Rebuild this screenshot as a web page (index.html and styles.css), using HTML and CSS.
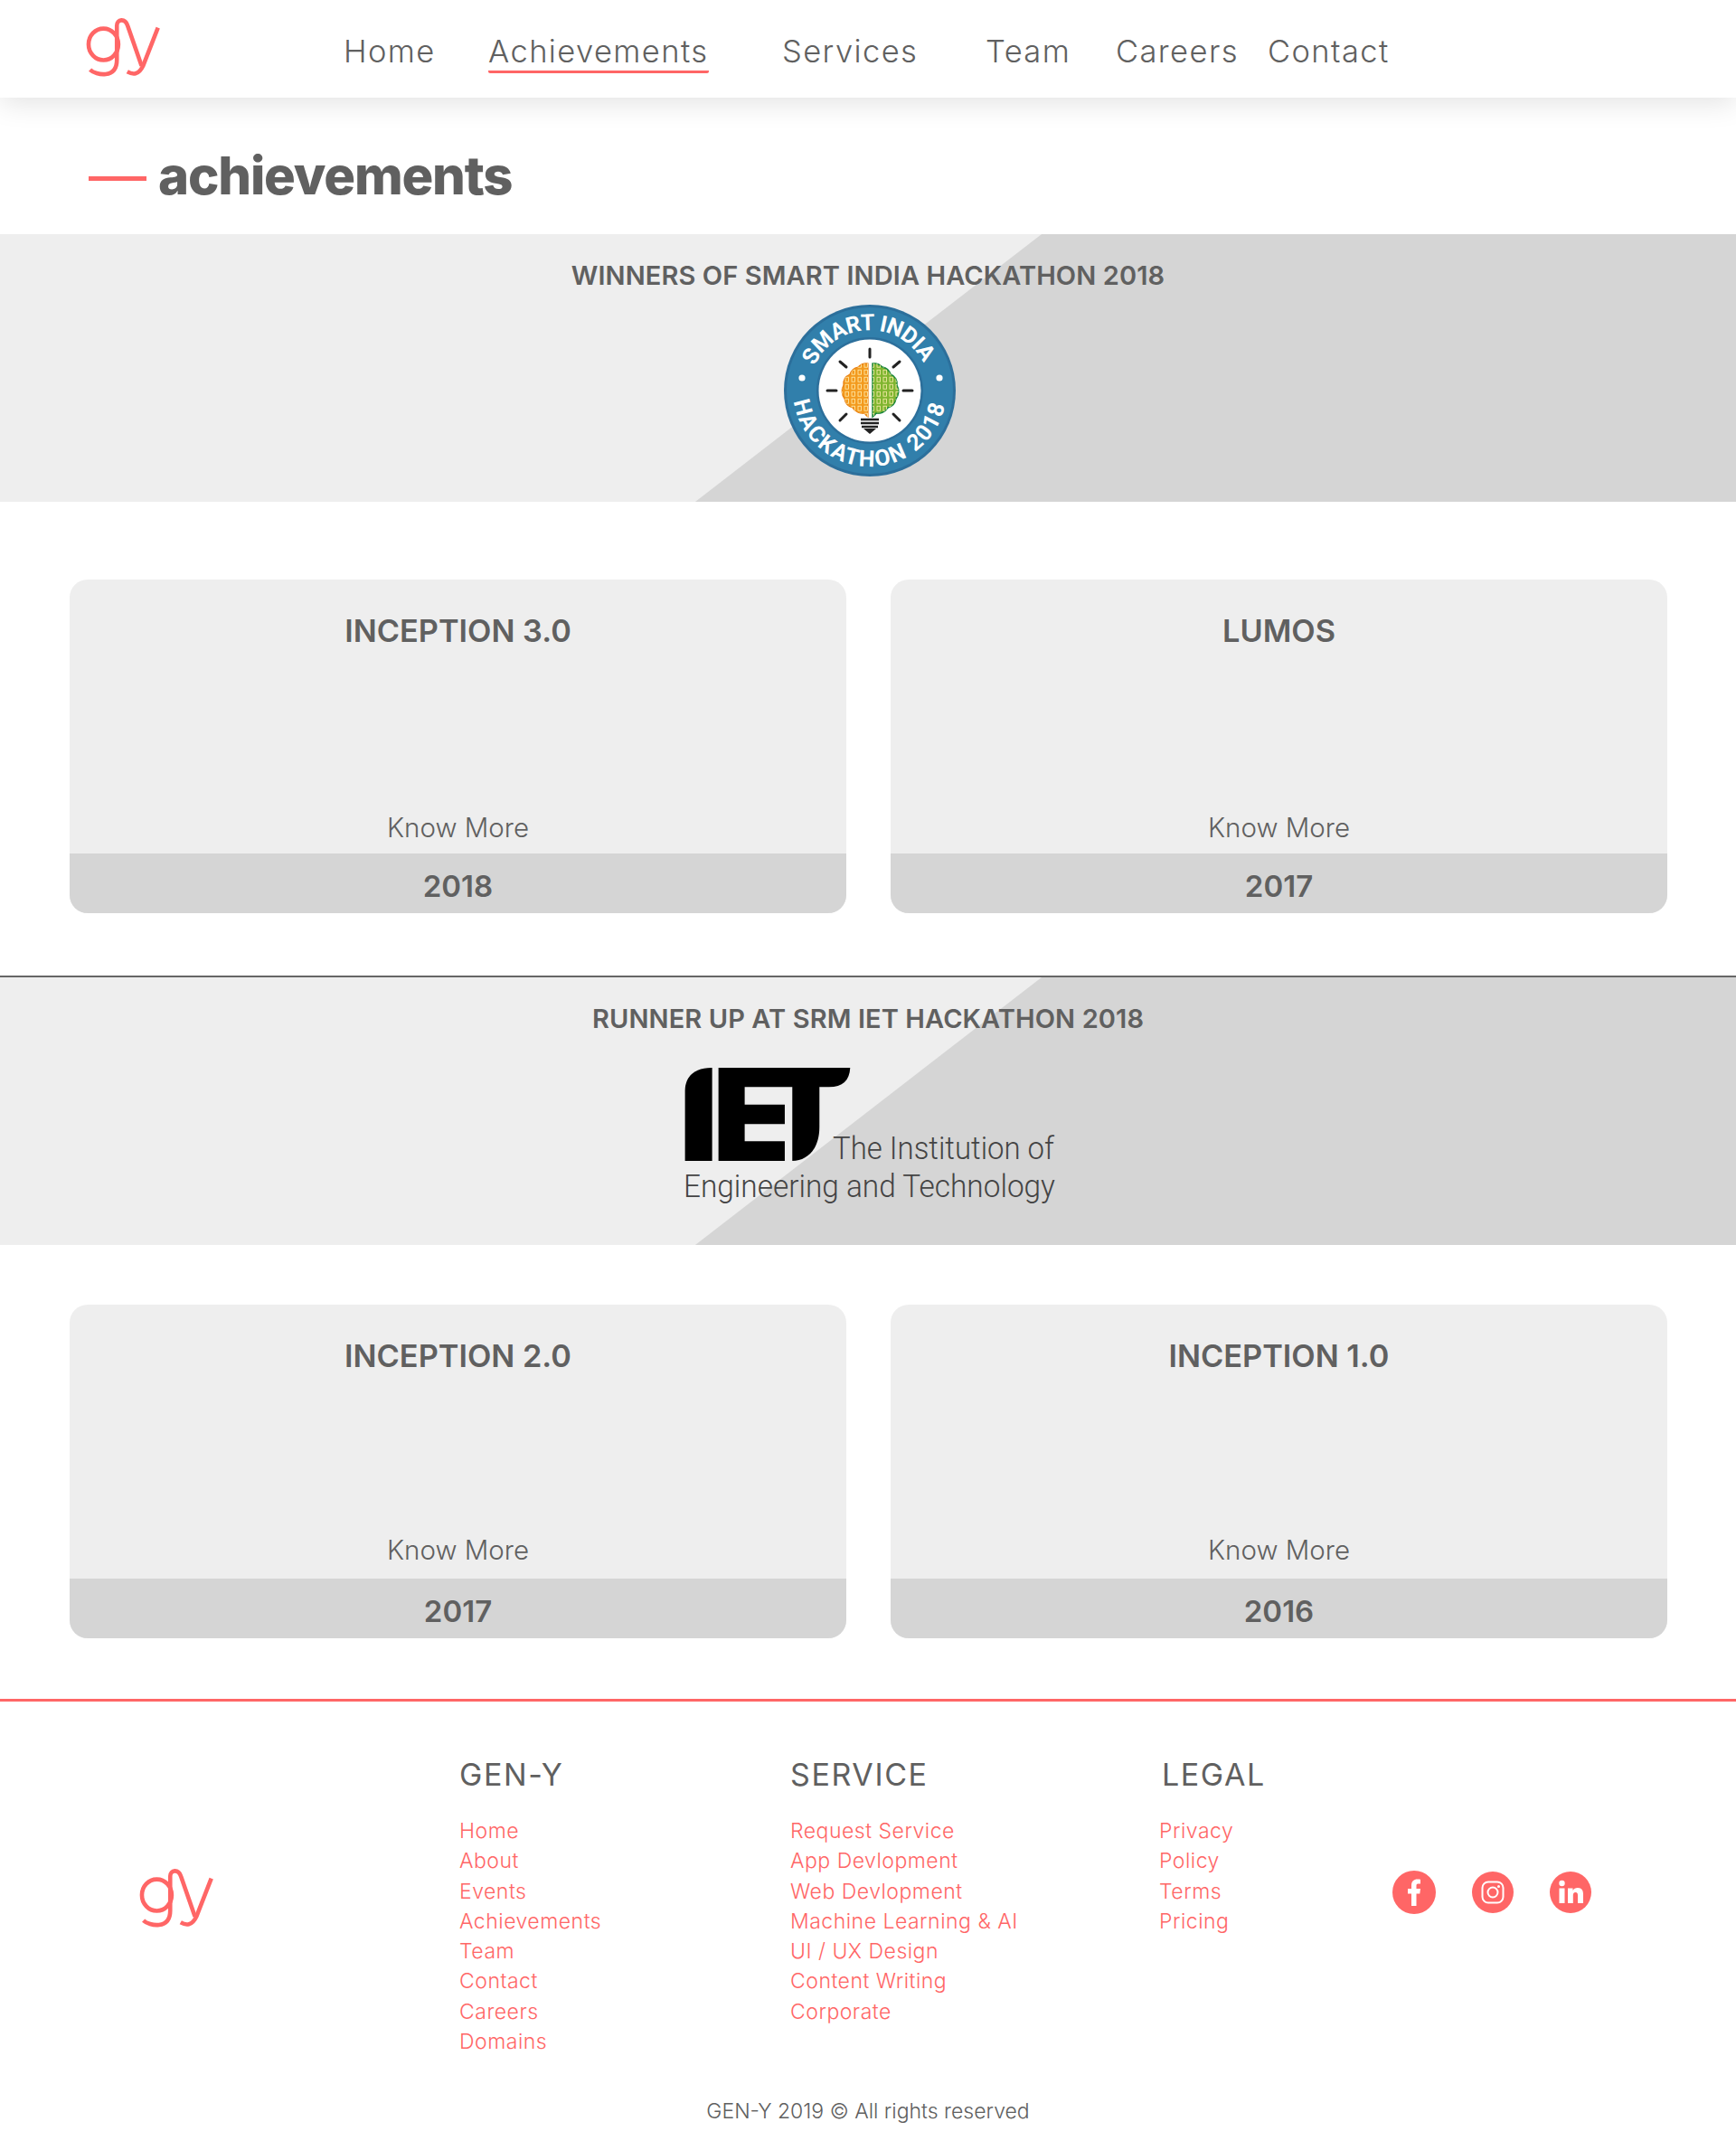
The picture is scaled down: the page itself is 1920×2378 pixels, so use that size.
FILE: index.html
```html
<!DOCTYPE html>
<html lang="en">
<head>
  <meta charset="UTF-8" />
  <title>Achievements - GEN-Y</title>
  <link rel="stylesheet" href="styles.css">
</head>
<body>
  <header class="navbar">
    <svg class="logo" viewBox="155 140 255 200"><use href="#gy-mark"></use></svg>
    <nav class="nav-links">
      <a href="#">Home</a>
      <a href="#" class="active">Achievements</a>
      <a href="#">Services</a>
      <a href="#">Team</a>
      <a href="#">Careers</a>
      <a href="#">Contact</a>
    </nav>
  </header>

  <div class="page-title">
    <span class="dash"></span>
    <h1>achievements</h1>
  </div>

  <section class="banner">
    <h2>WINNERS OF SMART INDIA HACKATHON 2018</h2>
    <svg class="badge" viewBox="-96 -96 192 192">
      <defs>
        <path id="arc-top" d="M -61 -27 A 66.7 66.7 0 0 1 61 -27"></path>
        <path id="arc-bottom" d="M -84 12 A 85 85 0 0 0 84 12"></path>
        <pattern id="bits" width="7" height="8" patternUnits="userSpaceOnUse">
          <rect x="1" y="1.2" width="3.4" height="5" fill="none" stroke="#ffeeb0" stroke-width="0.8"></rect>
        </pattern>
      </defs>
      <circle r="95" fill="#2c6f9b"></circle>
      <circle r="92" fill="#317fab"></circle>
      <circle r="59" fill="#2c6f9b"></circle>
      <circle r="56.5" fill="#fff"></circle>
      <text class="badge-text"><textPath href="#arc-top" textLength="150" lengthAdjust="spacing">SMART INDIA</textPath></text>
      <text class="badge-text"><textPath href="#arc-bottom" textLength="236" lengthAdjust="spacing">HACKATHON 2018</textPath></text>
      <circle cx="-75" cy="-14" r="3.6" fill="#fff"></circle>
      <circle cx="77" cy="-14" r="3.6" fill="#fff"></circle>
      <g stroke="#222" stroke-width="3" stroke-linecap="round">
        <path d="M0 -46 V-37 M-47 0 H-37 M37 0 H47 M-33 -32 L-26 -26 M33 -32 L26 -26 M-33 33 L-26 26 M33 33 L26 26"></path>
      </g>
      <path d="M-2 -30 C-8 -31 -11 -28 -13 -26 C-18 -25 -21 -21 -22 -18 C-27 -16 -30 -11 -29 -6 C-32 -1 -31 5 -28 9 C-27 15 -23 18 -19 19 C-16 24 -10 26 -6 25 C-4 28 -2 29 -2 29 Z" fill="#f39a1e" stroke="#e87f10" stroke-width="1.2"></path>
      <path d="M-2 -30 C-8 -31 -11 -28 -13 -26 C-18 -25 -21 -21 -22 -18 C-27 -16 -30 -11 -29 -6 C-32 -1 -31 5 -28 9 C-27 15 -23 18 -19 19 C-16 24 -10 26 -6 25 C-4 28 -2 29 -2 29 Z" fill="url(#bits)"></path>
      <path d="M3 -30 C9 -31 12 -28 14 -26 C19 -25 22 -21 23 -18 C28 -16 31 -11 30 -6 C33 -1 32 5 29 9 C28 15 24 18 20 19 C17 24 11 26 7 25 C5 28 3 29 3 29 Z" fill="#7fb52f" stroke="#17853a" stroke-width="1.4"></path>
      <path d="M3 -30 C9 -31 12 -28 14 -26 C19 -25 22 -21 23 -18 C28 -16 31 -11 30 -6 C33 -1 32 5 29 9 C28 15 24 18 20 19 C17 24 11 26 7 25 C5 28 3 29 3 29 Z" fill="url(#bits)"></path>
      <path d="M-10 32 H10 M-10 36 H10 M-9 40 H9" stroke="#222" stroke-width="2.4"></path>
      <path d="M-7 42 H7 L0 48 Z" fill="#222"></path>
    </svg>
  </section>

  <div class="card-grid first">
    <article class="card">
      <div class="card-body">
        <h3>INCEPTION 3.0</h3>
        <a href="#" class="know-more">Know More</a>
      </div>
      <div class="card-year">2018</div>
    </article>
    <article class="card">
      <div class="card-body">
        <h3>LUMOS</h3>
        <a href="#" class="know-more">Know More</a>
      </div>
      <div class="card-year">2017</div>
    </article>
  </div>

  <section class="banner ruled">
    <h2>RUNNER UP AT SRM IET HACKATHON 2018</h2>
    <svg class="iet" viewBox="0 0 450 160">
      <g transform="translate(-55.7 -81) scale(0.3333)">
        <path d="M262 243 V552 H172 V320 C172 270 205 243 262 243 Z"></path>
        <path d="M283 243 H720 C718 285 695 307 650 307 H618 V440 C618 510 580 552 528 552 V307 H370 V365 H503 V430 H370 V487 H503 V552 H283 Z"></path>
      </g>
      <text class="iet-text" x="165" y="101" textLength="245" lengthAdjust="spacingAndGlyphs">The Institution of</text>
      <text class="iet-text" x="0" y="143" textLength="411" lengthAdjust="spacingAndGlyphs">Engineering and Technology</text>
    </svg>
  </section>

  <div class="card-grid second">
    <article class="card">
      <div class="card-body">
        <h3>INCEPTION 2.0</h3>
        <a href="#" class="know-more">Know More</a>
      </div>
      <div class="card-year">2017</div>
    </article>
    <article class="card">
      <div class="card-body">
        <h3>INCEPTION 1.0</h3>
        <a href="#" class="know-more">Know More</a>
      </div>
      <div class="card-year">2016</div>
    </article>
  </div>

  <footer class="footer">
    <div class="footer-grid">
      <svg class="footer-logo" viewBox="155 140 255 200">
        <g id="gy-mark" fill="none" stroke="#ff6666" stroke-width="14">
          <ellipse cx="217" cy="228" rx="50" ry="53"></ellipse>
          <path d="M172 313 C192 332 262 345 262 280 V165 C262 142 290 140 298 165 L345 300"></path>
          <path d="M400 172 L350 300 C335 332 315 330 297 320"></path>
        </g>
      </svg>
      <div class="footer-col">
        <h4>GEN-Y</h4>
        <a href="#">Home</a>
        <a href="#">About</a>
        <a href="#">Events</a>
        <a href="#">Achievements</a>
        <a href="#">Team</a>
        <a href="#">Contact</a>
        <a href="#">Careers</a>
        <a href="#">Domains</a>
      </div>
      <div class="footer-col">
        <h4>SERVICE</h4>
        <a href="#">Request Service</a>
        <a href="#">App Devlopment</a>
        <a href="#">Web Devlopment</a>
        <a href="#">Machine Learning &amp; AI</a>
        <a href="#">UI / UX Design</a>
        <a href="#">Content Writing</a>
        <a href="#">Corporate</a>
      </div>
      <div class="footer-col legal">
        <h4>LEGAL</h4>
        <a href="#">Privacy</a>
        <a href="#">Policy</a>
        <a href="#">Terms</a>
        <a href="#">Pricing</a>
      </div>
      <div class="socials">
        <svg class="social big" viewBox="0 0 48 48">
          <circle cx="24" cy="24" r="24" fill="#ff6666"></circle>
          <path d="M21 39 V25.5 H17 V20 H21 V16.5 C21 11.5 24 9.5 27.5 9.5 C29 9.5 30.500 9.700 31 9.800 V14.500 H28.500 C26.500 14.500 26.500 15.500 26.500 17 V20 H31 L30.300 25.500 H26.500 V39 Z" fill="#fff"></path>
        </svg>
        <svg class="social" viewBox="0 0 46 46">
          <circle cx="23" cy="23" r="23" fill="#ff6666"></circle>
          <rect x="11.500" y="11.500" width="23" height="23" rx="6.500" fill="none" stroke="#fff" stroke-width="2"></rect>
          <circle cx="23" cy="23" r="5.500" fill="none" stroke="#fff" stroke-width="2"></circle>
          <circle cx="29.500" cy="16.500" r="1.500" fill="#fff"></circle>
        </svg>
        <svg class="social" viewBox="0 0 46 46">
          <circle cx="23" cy="23" r="23" fill="#ff6666"></circle>
          <circle cx="13.500" cy="13" r="3.200" fill="#fff"></circle>
          <path d="M10.500 18.500 H16.500 V35 H10.500 Z M20 18.500 H25.500 V21 C26.500 19.200 28.500 18 31 18 C35.500 18 37 21 37 25 V35 H31 V26.500 C31 24.500 30.500 23 28.500 23 C26.500 23 25.800 24.500 25.800 26.500 V35 H20 Z" fill="#fff"></path>
        </svg>
      </div>
    </div>
    <p class="copyright">GEN-Y 2019 &copy; All rights reserved</p>
  </footer>
</body>
</html>
```

FILE: styles.css
```css
* {
  box-sizing: border-box;
}

body {
  margin: 0;
  font-family: Inter, "Open Sans", sans-serif;
  background-color: #fff;
  color: #606060;
}

a {
  color: inherit;
  text-decoration: none;
}

h1, h2, h3, h4, p {
  margin: 0;
}

.navbar {
  display: flex;
  align-items: center;
  height: 108px;
  padding-left: 94px;
  background-color: #fff;
  box-shadow: 0 5px 30px rgba(0, 0, 0, 0.12);
}

.logo {
  width: 84px;
  height: 66px;
  margin-right: 202px;
  margin-top: -2px;
}

.nav-links {
  display: grid;
  grid-template-columns: 160px 325px 225px 144px 168px auto;
  font-size: 34.5px;
  font-weight: 300;
  letter-spacing: 1.4px;
  margin-top: 8px;
}

.nav-links a {
  justify-self: start;
  line-height: 42px;
}

.nav-links .active {
  border-bottom: 3px solid #ff6666;
  border-radius: 2px;
}

.page-title {
  display: flex;
  align-items: center;
  height: 151px;
  padding: 28px 0 0 98px;
}

.dash {
  width: 64px;
  height: 5px;
  background-color: #ff6666;
  margin-right: 13px;
}

.page-title h1 {
  font-size: 58px;
  font-weight: 800;
  letter-spacing: -1.2px;
  line-height: 60px;
  margin-bottom: 8px;
}

.banner {
  position: relative;
  height: 296px;
  padding-top: 28px;
  text-align: center;
  background-color: #eee;
}

.banner::before {
  content: "";
  position: absolute;
  top: 0;
  left: 0;
  width: 100%;
  height: 100%;
  background-color: #d5d5d5;
  clip-path: polygon(40.05% 100%, 60% 0, 100% 0, 100% 100%);
}

.banner h2,
.banner svg {
  position: relative;
}

.banner h2 {
  font-size: 29px;
  font-weight: 600;
  letter-spacing: 0.1px;
  line-height: 36px;
}

.banner.ruled {
  height: 298px;
  border-top: 2px solid #666;
}

.badge {
  display: block;
  width: 192px;
  height: 192px;
  margin: 13px 0 0 866px;
}

.badge-text {
  font-family: "Roboto", sans-serif;
  font-size: 25px;
  font-weight: 700;
  fill: #fff;
}

.iet {
  display: block;
  width: 450px;
  height: 160px;
  margin: 36px 0 0 756px;
  fill: #000;
}

.iet-text {
  font-family: "Roboto", sans-serif;
  font-size: 35px;
  font-weight: 300;
  fill: #444;
}

.card-grid {
  display: grid;
  grid-template-columns: 859px 859px;
  gap: 49px;
  padding-left: 77px;
}

.card-grid.first {
  margin: 86px 0 69px;
}

.card-grid.second {
  margin: 66px 0 67px;
}

.card {
  display: flex;
  flex-direction: column;
  height: 369px;
  border-radius: 20px;
  overflow: hidden;
  background-color: #eee;
  text-align: center;
}

.card-body {
  flex: 1;
  display: flex;
  flex-direction: column;
  padding: 37px 0 14px;
}

.second .card-body {
  padding-bottom: 17px;
}

.card-body h3 {
  font-size: 34.3px;
  font-weight: 600;
  line-height: 40px;
}

.know-more {
  margin-top: auto;
  font-size: 29.5px;
  font-weight: 300;
  line-height: 30px;
}

.card-year {
  height: 66px;
  background-color: #d5d5d5;
  font-size: 33px;
  font-weight: 600;
  line-height: 72px;
}

.footer {
  border-top: 3px solid #ff6666;
  padding-top: 60px;
  height: 499px;
}

.footer-grid {
  display: grid;
  grid-template-columns: 355px 366px 411px 255px auto;
  padding-left: 153px;
}

.footer-logo {
  width: 84px;
  height: 66px;
  align-self: center;
  margin-bottom: 18px;
}

.footer-col {
  display: flex;
  flex-direction: column;
  align-items: flex-start;
  font-size: 23px;
  letter-spacing: 0.5px;
  color: #ff6666;
}

.footer-col h4 {
  font-size: 34px;
  font-weight: 400;
  letter-spacing: 1.6px;
  line-height: 42px;
  color: #606060;
  margin-bottom: 25px;
}

.footer-col a {
  font-weight: 300;
  line-height: 33.3px;
}

.footer-col.legal a {
  margin-left: -3px;
}

.socials {
  display: flex;
  align-items: center;
  gap: 40px;
  align-self: center;
  margin-bottom: 32px;
}

.social {
  width: 46px;
  height: 46px;
}

.social.big {
  width: 48px;
  height: 48px;
}

.copyright {
  margin-top: 45px;
  font-size: 23px;
  font-weight: 300;
  line-height: 30px;
  text-align: center;
}
```
